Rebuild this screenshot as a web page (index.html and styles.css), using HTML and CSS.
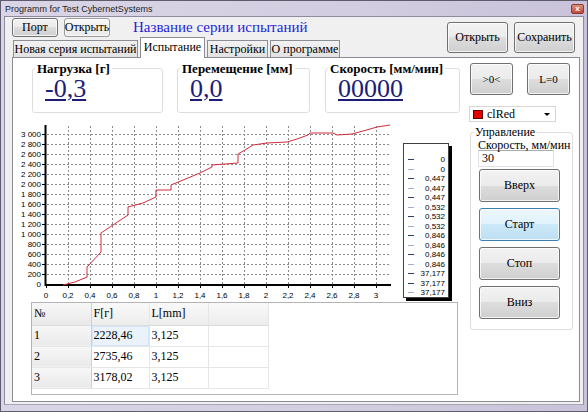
FILE: index.html
```html
<!DOCTYPE html>
<html lang="ru">
<head>
<meta charset="utf-8">
<title>Programm for Test CybernetSystems</title>
<link rel="stylesheet" href="styles.css">
</head>
<body>
<div class="window">
  <div class="titlebar">
    <span class="title">Programm for Test CybernetSystems</span>
    <span class="close">x</span>
  </div>
  <div class="client">
    <div class="header">
      <div class="header-left">
        <div class="toolbar">
          <button class="btn btn-small">Порт</button>
          <button class="btn btn-small btn-flat">Открыть</button>
          <h1 class="series-title">Название серии испытаний</h1>
        </div>
        <div class="tabs">
          <span class="tab tab-w1">Новая серия испытаний</span>
          <span class="tab tab-active">Испытание</span>
          <span class="tab tab-w3">Настройки</span>
          <span class="tab tab-w4">О программе</span>
        </div>
      </div>
      <div class="header-right">
        <button class="btn btn-big">Открыть</button>
        <button class="btn btn-big">Сохранить</button>
      </div>
    </div>

    <div class="page">
      <div class="main">
        <div class="readouts">
          <fieldset class="readout r1"><legend>Нагрузка [г]</legend><div class="value">-0,3</div></fieldset>
          <fieldset class="readout r2"><legend>Перемещение [мм]</legend><div class="value">0,0</div></fieldset>
          <fieldset class="readout r3"><legend>Скорость [мм/мин]</legend><div class="value">00000</div></fieldset>
        </div>

        <div class="chart-row">
          <svg class="chart" width="385" height="184" viewBox="15 118 385 184" xmlns="http://www.w3.org/2000/svg">
            <g class="grid-h" stroke="#8a8a8a" stroke-width="1" stroke-dasharray="2 2">
              <line x1="47" y1="134.5" x2="390" y2="134.5"/>
              <line x1="47" y1="144.5" x2="390" y2="144.5"/>
              <line x1="47" y1="154.5" x2="390" y2="154.5"/>
              <line x1="47" y1="164.5" x2="390" y2="164.5"/>
              <line x1="47" y1="174.5" x2="390" y2="174.5"/>
              <line x1="47" y1="184.5" x2="390" y2="184.5"/>
              <line x1="47" y1="194.5" x2="390" y2="194.5"/>
              <line x1="47" y1="204.5" x2="390" y2="204.5"/>
              <line x1="47" y1="214.5" x2="390" y2="214.5"/>
              <line x1="47" y1="224.5" x2="390" y2="224.5"/>
              <line x1="47" y1="234.5" x2="390" y2="234.5"/>
              <line x1="47" y1="244.5" x2="390" y2="244.5"/>
              <line x1="47" y1="254.5" x2="390" y2="254.5"/>
              <line x1="47" y1="264.5" x2="390" y2="264.5"/>
              <line x1="47" y1="274.5" x2="390" y2="274.5"/>
            </g>
            <g class="grid-v" stroke="#8a8a8a" stroke-width="1" stroke-dasharray="2 2">
              <line x1="68.5" y1="126" x2="68.5" y2="284"/>
              <line x1="90.5" y1="126" x2="90.5" y2="284"/>
              <line x1="112.5" y1="126" x2="112.5" y2="284"/>
              <line x1="134.5" y1="126" x2="134.5" y2="284"/>
              <line x1="156.5" y1="126" x2="156.5" y2="284"/>
              <line x1="178.5" y1="126" x2="178.5" y2="284"/>
              <line x1="200.5" y1="126" x2="200.5" y2="284"/>
              <line x1="222.5" y1="126" x2="222.5" y2="284"/>
              <line x1="244.5" y1="126" x2="244.5" y2="284"/>
              <line x1="266.5" y1="126" x2="266.5" y2="284"/>
              <line x1="288.5" y1="126" x2="288.5" y2="284"/>
              <line x1="310.5" y1="126" x2="310.5" y2="284"/>
              <line x1="332.5" y1="126" x2="332.5" y2="284"/>
              <line x1="354.5" y1="126" x2="354.5" y2="284"/>
              <line x1="376.5" y1="126" x2="376.5" y2="284"/>
            </g>
            <g class="ticks" stroke="#000" stroke-width="1">
              <line x1="42" y1="134.5" x2="45" y2="134.5"/>
              <line x1="42" y1="144.5" x2="45" y2="144.5"/>
              <line x1="42" y1="154.5" x2="45" y2="154.5"/>
              <line x1="42" y1="164.5" x2="45" y2="164.5"/>
              <line x1="42" y1="174.5" x2="45" y2="174.5"/>
              <line x1="42" y1="184.5" x2="45" y2="184.5"/>
              <line x1="42" y1="194.5" x2="45" y2="194.5"/>
              <line x1="42" y1="204.5" x2="45" y2="204.5"/>
              <line x1="42" y1="214.5" x2="45" y2="214.5"/>
              <line x1="42" y1="224.5" x2="45" y2="224.5"/>
              <line x1="42" y1="234.5" x2="45" y2="234.5"/>
              <line x1="42" y1="244.5" x2="45" y2="244.5"/>
              <line x1="42" y1="254.5" x2="45" y2="254.5"/>
              <line x1="42" y1="264.5" x2="45" y2="264.5"/>
              <line x1="42" y1="274.5" x2="45" y2="274.5"/>
              <line x1="46.5" y1="285" x2="46.5" y2="288"/>
              <line x1="68.5" y1="285" x2="68.5" y2="288"/>
              <line x1="90.5" y1="285" x2="90.5" y2="288"/>
              <line x1="112.5" y1="285" x2="112.5" y2="288"/>
              <line x1="134.5" y1="285" x2="134.5" y2="288"/>
              <line x1="156.5" y1="285" x2="156.5" y2="288"/>
              <line x1="178.5" y1="285" x2="178.5" y2="288"/>
              <line x1="200.5" y1="285" x2="200.5" y2="288"/>
              <line x1="222.5" y1="285" x2="222.5" y2="288"/>
              <line x1="244.5" y1="285" x2="244.5" y2="288"/>
              <line x1="266.5" y1="285" x2="266.5" y2="288"/>
              <line x1="288.5" y1="285" x2="288.5" y2="288"/>
              <line x1="310.5" y1="285" x2="310.5" y2="288"/>
              <line x1="332.5" y1="285" x2="332.5" y2="288"/>
              <line x1="354.5" y1="285" x2="354.5" y2="288"/>
              <line x1="376.5" y1="285" x2="376.5" y2="288"/>
            </g>
            <g class="axes" stroke="#000" stroke-width="2">
              <line x1="45.5" y1="125" x2="45.5" y2="286"/>
              <line x1="45" y1="285" x2="391" y2="285"/>
            </g>
            <polyline class="series" fill="none" stroke="#d02a3a" stroke-width="1"
              points="63,285 75,282 87,277 87,267 101,252 101,233 128,215 128,207 143,203 156,197 156,190 171,190 171,185 200,173 212,167 212,165 238,163 238,154 245,150 253,145 267,143 287,142 297,139 308,135 310,133 333,133 337,135 352,134 363,131 377,127 390,125"/>
            <g class="ylabels" font-family="Liberation Sans, Arial, sans-serif" font-size="8" text-anchor="end" fill="#000">
              <text x="41" y="137">3 000</text>
              <text x="41" y="147">2 800</text>
              <text x="41" y="157">2 600</text>
              <text x="41" y="167">2 400</text>
              <text x="41" y="177">2 200</text>
              <text x="41" y="187">2 000</text>
              <text x="41" y="197">1 800</text>
              <text x="41" y="207">1 600</text>
              <text x="41" y="217">1 400</text>
              <text x="41" y="227">1 200</text>
              <text x="41" y="237">1 000</text>
              <text x="41" y="247">800</text>
              <text x="41" y="257">600</text>
              <text x="41" y="267">400</text>
              <text x="41" y="277">200</text>
              <text x="41" y="287">0</text>
            </g>
            <g class="xlabels" font-family="Liberation Sans, Arial, sans-serif" font-size="8" text-anchor="middle" fill="#000">
              <text x="46" y="298">0</text>
              <text x="68" y="298">0,2</text>
              <text x="90" y="298">0,4</text>
              <text x="112" y="298">0,6</text>
              <text x="134" y="298">0,8</text>
              <text x="156" y="298">1</text>
              <text x="178" y="298">1,2</text>
              <text x="200" y="298">1,4</text>
              <text x="222" y="298">1,6</text>
              <text x="244" y="298">1,8</text>
              <text x="266" y="298">2</text>
              <text x="288" y="298">2,2</text>
              <text x="310" y="298">2,4</text>
              <text x="332" y="298">2,6</text>
              <text x="354" y="298">2,8</text>
              <text x="376" y="298">3</text>
            </g>
          </svg>
          <ul class="legend">
            <li class="dark"><i></i>0</li>
            <li class="light"><i></i>0</li>
            <li class="dark"><i></i>0,447</li>
            <li class="light"><i></i>0,447</li>
            <li class="dark"><i></i>0,447</li>
            <li class="light"><i></i>0,532</li>
            <li class="dark"><i></i>0,532</li>
            <li class="light"><i></i>0,532</li>
            <li class="dark"><i></i>0,846</li>
            <li class="light"><i></i>0,846</li>
            <li class="dark"><i></i>0,846</li>
            <li class="light"><i></i>0,846</li>
            <li class="dark"><i></i>37,177</li>
            <li class="dark"><i></i>37,177</li>
            <li class="light"><i></i>37,177</li>
          </ul>
        </div>

        <div class="grid-wrap">
          <table class="grid">
            <colgroup><col class="c0"><col class="c1"><col class="c2"><col class="c3"></colgroup>
            <thead>
              <tr><th class="fixed">№</th><th>F[г]</th><th>L[mm]</th><th></th></tr>
            </thead>
            <tbody>
              <tr><th class="fixed">1</th><td class="focus">2228,46</td><td>3,125</td><td></td></tr>
              <tr><th class="fixed">2</th><td>2735,46</td><td>3,125</td><td></td></tr>
              <tr><th class="fixed">3</th><td>3178,02</td><td>3,125</td><td></td></tr>
            </tbody>
          </table>
        </div>
      </div>

      <div class="side">
        <div class="side-top">
          <button class="btn btn-sq">&gt;0&lt;</button>
          <button class="btn btn-sq">L=0</button>
        </div>
        <div class="combo">
          <span class="swatch"></span>
          <span class="combo-text">clRed</span>
          <span class="combo-arrow"></span>
        </div>
        <fieldset class="control">
          <legend>Управление</legend>
          <div class="speed-label">Скорость, мм/мин</div>
          <div class="speed-input">30</div>
          <div class="control-buttons">
            <button class="btn btn-ctl">Вверх</button>
            <button class="btn btn-ctl btn-hot">Старт</button>
            <button class="btn btn-ctl">Стоп</button>
            <button class="btn btn-ctl">Вниз</button>
          </div>
        </fieldset>
      </div>
    </div>
  </div>
</div>
</body>
</html>
```

FILE: styles.css
```css
* { box-sizing: border-box; }

html, body {
  margin: 0;
  padding: 0;
}

body {
  width: 588px;
  height: 412px;
  overflow: hidden;
  background: #cdc8da;
  font-family: "Liberation Serif", "Times New Roman", serif;
  color: #000;
}

.window {
  width: 588px;
  height: 412px;
  display: flex;
  flex-direction: column;
  padding: 0 3px 6px 3px;
  border: 1px solid #5e5b6c;
  background: linear-gradient(90deg, #d9d5e6 0%, #d2cde0 60%, #c9c2da 100%);
}

.titlebar {
  height: 15px;
  display: flex;
  align-items: center;
  justify-content: space-between;
  padding: 0 0 0 1px;
}

.title {
  font-family: "Liberation Sans", Arial, sans-serif;
  font-size: 9px;
  color: #1e1e1e;
}

.close {
  width: 13px;
  height: 10px;
  margin-top: 1px;
  border-radius: 2px;
  border: 1px solid #8a3a30;
  background: linear-gradient(#e09080, #c0483a);
  color: #fff;
  font-family: "Liberation Sans", Arial, sans-serif;
  font-size: 8px;
  font-weight: bold;
  line-height: 8px;
  text-align: center;
}

.client {
  flex: 1;
  display: flex;
  flex-direction: column;
  background: #f0f0f0;
  border: 1px solid #8e8b9e;
  border-bottom-color: #a8a6b4;
}

/* ---------- header ---------- */
.header {
  height: 40px;
  display: flex;
  justify-content: space-between;
}

.header-left {
  padding-left: 7px;
}

.toolbar {
  margin-top: 1px;
  height: 19px;
  display: flex;
  align-items: center;
  gap: 6px;
}

.series-title {
  margin: 0 0 0 17px;
  font-size: 15px;
  font-weight: normal;
  line-height: 19px;
  color: #1f1fd8;
  white-space: nowrap;
}

.header-right {
  display: flex;
  gap: 6px;
  margin-top: 5px;
  padding-right: 8px;
}

/* ---------- buttons ---------- */
.btn {
  font-family: "Liberation Serif", "Times New Roman", serif;
  font-size: 12px;
  color: #000;
  padding: 0;
  border: 1px solid #707070;
  border-radius: 3px;
  background: linear-gradient(#f2f2f2 0%, #ebebeb 50%, #dddddd 50%, #cfcfcf 100%);
  box-shadow: inset 0 0 0 1px rgba(255, 255, 255, 0.75);
  display: flex;
  align-items: center;
  justify-content: center;
}

.btn-small {
  width: 46px;
  height: 19px;
  font-size: 12px;
}

.btn-flat {
  background: linear-gradient(#f8f8f8, #e9e9e9);
  border-color: #9a9a9a;
}

.btn-big {
  width: 61px;
  height: 31px;
}

.btn-sq {
  width: 43px;
  height: 32px;
  font-size: 11px;
}

.btn-ctl {
  width: 81px;
  height: 33px;
  font-size: 12px;
}

.btn-hot {
  border-color: #3c7fb1;
  background: linear-gradient(#ecf7fd 0%, #e0f2fc 50%, #cbe9f8 50%, #bcdff2 100%);
}

/* ---------- tabs ---------- */
.tabs {
  height: 20px;
  display: flex;
  align-items: flex-end;
  gap: 2px;
  padding-left: 1px;
  position: relative;
  z-index: 1;
}

.tab {
  height: 17px;
  display: flex;
  align-items: center;
  justify-content: center;
  font-size: 12px;
  white-space: nowrap;
  border: 1px solid #8c8e94;
  border-bottom: none;
  background: linear-gradient(#f2f2f2, #e2e2e2);
}

.tab-w1 { width: 125px; }
.tab-w3 { width: 61px; }
.tab-w4 { width: 70px; }

.tab-active {
  width: 65px;
  height: 21px;
  margin-bottom: -1px;
  background: #fff;
  align-items: flex-start;
  padding-top: 2px;
}

/* ---------- tab page ---------- */
.page {
  flex: 1;
  margin: 0 3px 2px 7px;
  border: 1px solid #898c95;
  background: #fff;
  display: flex;
}

.main {
  width: 456px;
  display: flex;
  flex-direction: column;
}

.readouts {
  display: flex;
  margin-top: 4px;
  padding-left: 19px;
}

.readout {
  margin: 0;
  padding: 0;
  height: 51px;
  border: 1px solid #dedede;
  border-radius: 3px;
  min-inline-size: 0;
}

.r1 { width: 131px; }
.r2 { width: 133px; margin-left: 14px; }
.r3 { width: 135px; margin-left: 15px; }

.readout legend {
  margin-left: 2px;
  padding: 0 2px;
  font-size: 13px;
  font-weight: bold;
  line-height: 13px;
  white-space: nowrap;
}

.value {
  margin-top: 1px;
  padding-left: 12px;
  font-size: 26px;
  line-height: 26px;
  color: #1d1d78;
  text-decoration: underline;
  text-decoration-thickness: 2px;
  text-underline-offset: 2px;
}

/* ---------- chart ---------- */
.chart-row {
  margin-top: 5px;
  margin-left: 2px;
  height: 184px;
  display: flex;
  align-items: flex-start;
}

.chart {
  display: block;
  flex: none;
}

.legend {
  list-style: none;
  margin: 25px 0 0 3px;
  width: 46px;
  height: 155px;
  padding: 11px 3px 0 4px;
  background: #fff;
  border: 1px solid #404040;
  box-shadow: 3px 3px 0 #000;
  font-family: "Liberation Sans", Arial, sans-serif;
  font-size: 8px;
}

.legend li {
  height: 9.5px;
  line-height: 9.5px;
  display: flex;
  align-items: center;
  justify-content: space-between;
}

.legend i {
  display: block;
  width: 6px;
  height: 1px;
}

.legend .dark i { background: #2c3c70; }
.legend .light i { background: #9fb0cc; }

/* ---------- table ---------- */
.grid-wrap {
  margin-left: 18px;
  width: 427px;
  height: 93px;
  border: 1px solid #b4b4b4;
  background: #fff;
}

.grid {
  border-collapse: collapse;
  table-layout: fixed;
  width: 236px;
  font-size: 12px;
}

.grid col.c0 { width: 59px; }
.grid col.c1 { width: 58px; }
.grid col.c2 { width: 59px; }
.grid col.c3 { width: 60px; }

.grid th,
.grid td {
  padding: 0 0 0 2px;
  text-align: left;
  font-weight: normal;
  border: 1px solid #e6e6e6;
  border-top: none;
  border-left: none;
  white-space: nowrap;
}

.grid thead th {
  height: 22px;
  background: linear-gradient(#f9f9f9, #ececec);
  border-bottom-color: #dcdcdc;
}

.grid tbody td,
.grid tbody th {
  height: 21px;
}

.grid .fixed {
  background: linear-gradient(#f7f7f7, #e9e9e9);
  border-right-color: #cfcfcf;
}

.grid .focus {
  background: #eaf3fb;
  box-shadow: inset 0 0 0 1px #d4e6f6;
}

/* ---------- side column ---------- */
.side {
  flex: 1;
  display: flex;
  flex-direction: column;
}

.side-top {
  display: flex;
  gap: 14px;
  margin-top: 5px;
  margin-left: 1px;
}

.combo {
  margin-top: 11px;
  width: 87px;
  height: 16px;
  border: 1px solid #d6d6d6;
  background: #fff;
  display: flex;
  align-items: center;
  padding-left: 3px;
}

.swatch {
  width: 10px;
  height: 9px;
  background: #e00000;
  border: 1px solid #600000;
}

.combo-text {
  margin-left: 4px;
  font-size: 12px;
  flex: 1;
}

.combo-arrow {
  width: 0;
  height: 0;
  margin-right: 5px;
  border-left: 3px solid transparent;
  border-right: 3px solid transparent;
  border-top: 3px solid #000;
}

.control {
  margin: 4px 0 0 1px;
  padding: 0 0 10px 0;
  width: 103px;
  border: 1px solid #dedede;
  border-radius: 3px;
  min-inline-size: 0;
}

.control legend {
  margin-left: 3px;
  padding: 0 1px;
  font-size: 12px;
  line-height: 12px;
}

.speed-label {
  margin-top: 3px;
  padding-left: 7px;
  font-size: 12px;
  line-height: 9px;
  white-space: nowrap;
}

.speed-input {
  margin-left: 7px;
  width: 76px;
  height: 17px;
  border: 1px solid #e2e3ea;
  border-top-color: #abadb3;
  background: #fff;
  font-size: 12px;
  line-height: 15px;
  padding-left: 3px;
}

.control-buttons {
  margin: 2px 0 0 8px;
  display: flex;
  flex-direction: column;
  gap: 6px;
}
```
